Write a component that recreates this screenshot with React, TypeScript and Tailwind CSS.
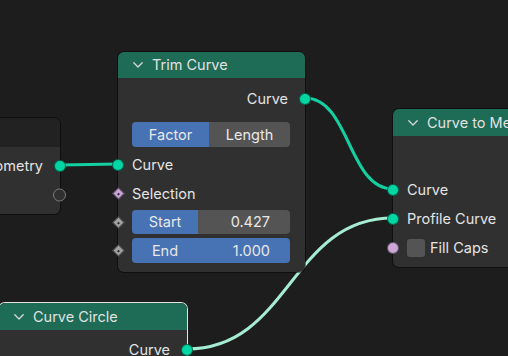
import type { ReactNode } from 'react'

function GeoSocket({ className = '', color = 'bg-[#00d6a3]' }: { className?: string; color?: string }) {
  return (
    <span className={`absolute top-1/2 h-[12px] w-[12px] -translate-y-1/2 rounded-full border border-black/50 ${color} ${className}`} />
  )
}

function Diamond({ className = '', color = 'bg-[#c7a3d6]' }: { className?: string; color?: string }) {
  return (
    <span className={`absolute flex h-[12px] w-[12px] items-center justify-center ${className}`}>
      <span className={`flex h-[9px] w-[9px] rotate-45 items-center justify-center border border-black/60 ${color}`}>
        <span className="h-[2px] w-[2px] bg-[#2a2a2a]" />
      </span>
    </span>
  )
}

function Chevron() {
  return (
    <svg width="10" height="6" viewBox="0 0 10 6" className="shrink-0">
      <path d="M0.8 0.8 L5 5 L9.2 0.8" fill="none" stroke="#d8d8d8" strokeWidth="1.3" strokeLinecap="round" strokeLinejoin="round" />
    </svg>
  )
}

function Node({
  left,
  top,
  width,
  title,
  header = 'bg-[#1e6b56] h-[27px]',
  selected,
  children,
}: {
  left: number
  top: number
  width: number
  title: string
  header?: string
  selected?: boolean
  children: ReactNode
}) {
  return (
    <div
      className={`absolute rounded-[6px] shadow-[0_0_0_1px_rgba(0,0,0,0.45)] ${selected ? 'ring-1 ring-[#e4e4e4]' : ''}`}
      style={{ left, top, width }}
    >
      <div className={`flex items-center gap-[9px] rounded-t-[6px] pl-[15px] ${header}`}>
        {title && <Chevron />}
        <span className="whitespace-nowrap text-[14.5px] text-[#e2e2e2]">{title}</span>
      </div>
      <div className="rounded-b-[6px] bg-[#303030]">{children}</div>
    </div>
  )
}

function Row({ children, className = '' }: { children?: ReactNode; className?: string }) {
  return <div className={`relative flex h-[29px] items-center text-[14.5px] text-[#e4e4e4] ${className}`}>{children}</div>
}

export default function App() {
  return (
    <div className="relative h-[356px] w-[508px] overflow-hidden bg-[#1d1d1d] font-['Inter','Liberation_Sans',sans-serif]">
      <svg className="absolute inset-0" width="508" height="356">
        <path d="M60 165 L118 164" stroke="#14cf9f" strokeWidth="3" fill="none" />
        <path d="M305 98 C 350 98, 348 189, 393 189" stroke="#14cf9f" strokeWidth="3" fill="none" />
        <path d="M187 349 C 290 349, 290 218, 393 218" stroke="#a6ecd2" strokeWidth="3" fill="none" />
      </svg>

      {/* Geometry node clipped at the left edge */}
      <Node left={-120} top={118} width={180} title="" header="bg-[#222222] h-[29px]">
        <div className="pb-[5px] pt-[4px]">
          <Row className="justify-end pr-[17px]">
            Geometry
            <GeoSocket className="-right-[6px]" />
          </Row>
          <Row>
            <span className="absolute -right-[6px] top-1/2 h-[13px] w-[13px] -translate-y-1/2 rounded-full border-[1.5px] border-[#7d7d7d] bg-[#303030]" />
          </Row>
        </div>
      </Node>

      {/* Trim Curve */}
      <Node left={118} top={52} width={187} title="Trim Curve" header="bg-[#1e6b56] h-[26px]">
        <div className="pb-[9px] pl-[14px] pr-[15px] pt-[6px]">
          <Row className="justify-end pr-[2px]">
            Curve
            <GeoSocket className="-right-[21px]" />
          </Row>
          <div className="mt-[9px] flex h-[25px] overflow-hidden rounded-[4px] text-[14.5px] text-[#e8e8e8]">
            <div className="flex w-[77px] items-center justify-center bg-[#4772b3]">Factor</div>
            <div className="flex flex-1 items-center justify-center bg-[#545454]">Length</div>
          </div>
          <Row className="mt-[3px]">
            <GeoSocket className="-left-[20px]" />
            Curve
          </Row>
          <Row>
            <Diamond className="-left-[20px] top-[8px]" />
            Selection
          </Row>
          <div className="relative mt-[2px] flex h-[24px] rounded-[4px] text-[14.5px] text-[#e8e8e8]">
            <Diamond className="-left-[20px] top-[6px]" color="bg-[#a1a1a1]" />
            <div className="flex w-[66px] items-center justify-center rounded-l-[4px] bg-[#4772b3]">Start</div>
            <div className="flex flex-1 items-center justify-end rounded-r-[4px] bg-[#545454] pr-[20px]">0.427</div>
          </div>
          <div className="relative mt-[4px] flex h-[25px] items-center rounded-[4px] bg-[#4772b3] text-[14.5px] text-[#e8e8e8]">
            <Diamond className="-left-[20px] top-[6px]" color="bg-[#a1a1a1]" />
            <span className="flex w-[66px] justify-center">End</span>
            <span className="ml-auto pr-[20px]">1.000</span>
          </div>
        </div>
      </Node>

      {/* Curve to Mesh */}
      <Node left={393} top={109} width={180} title="Curve to Mesh">
        <div className="pb-[5px] pl-[14px] pt-[10px]">
          <Row />
          <Row>
            <GeoSocket className="-left-[20px]" />
            Curve
          </Row>
          <Row>
            <GeoSocket className="-left-[20px]" />
            Profile Curve
          </Row>
          <Row className="gap-[5px]">
            <GeoSocket className="-left-[20px]" color="bg-[#cca6d6]" />
            <span className="h-[18px] w-[18px] rounded-[3px] bg-[#545454]" />
            Fill Caps
          </Row>
        </div>
      </Node>

      {/* Curve Circle (selected) */}
      <Node left={-1} top={303} width={188} title="Curve Circle" selected>
        <div className="pb-[6px] pt-[5px]">
          <Row className="justify-end pr-[17px]">
            Curve
            <GeoSocket className="-right-[6px]" />
          </Row>
        </div>
      </Node>
    </div>
  )
}
